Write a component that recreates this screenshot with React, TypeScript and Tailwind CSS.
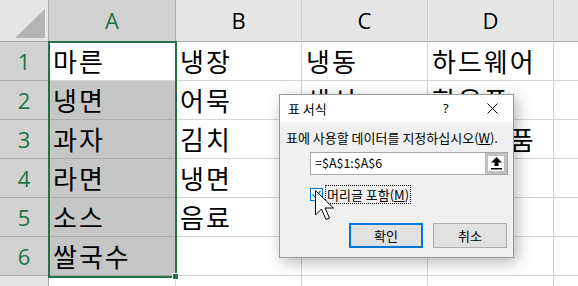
import React from "react";

const rows: string[][] = [
  ["마른", "냉장", "냉동", "하드웨어"],
  ["냉면", "어묵", "생선", "학용품"],
  ["과자", "김치", "", "주방용품"],
  ["라면", "냉면", "", ""],
  ["소스", "음료", "", ""],
  ["쌀국수", "", "", ""],
];

const colW = ["w-[127px]", "w-[126px]", "w-[126px]", "w-[126px]"];

export default function App() {
  return (
    <div className="relative w-[578px] h-[286px] overflow-hidden bg-white font-['Noto_Sans_CJK_KR',sans-serif] text-black">
      {/* Column header */}
      <div className="flex h-[42px]">
        <div className="relative w-[49px] shrink-0 bg-[#e6e6e6] border-r border-b border-[#ababab]">
          <svg className="absolute left-0 top-0" width="48" height="41" viewBox="0 0 48 41">
            <polygon points="45,9 45,38 15,38" fill="#b4b4b4" />
          </svg>
        </div>
        {["A", "B", "C", "D"].map((c, i) => (
          <div
            key={c}
            className={`${colW[i]} shrink-0 flex items-center justify-center border-r border-b border-[#ababab] font-['Open_Sans',sans-serif] text-[22px] ${
              i === 0 ? "bg-[#d2d2d2] text-[#217346]" : "bg-[#e6e6e6] text-black border-r-[#d0d0d0]"
            }`}
          >
            {c}
          </div>
        ))}
        <div className="flex-1 bg-[#e6e6e6] border-b border-[#ababab]" />
      </div>

      {/* Rows */}
      {rows.map((r, ri) => (
        <div key={ri} className="flex h-[39px]">
          <div className="w-[49px] shrink-0 flex items-center justify-center bg-[#d2d2d2] border-r border-b border-[#ababab] font-['Open_Sans',sans-serif] text-[22px] text-[#217346]">
            {ri + 1}
          </div>
          {r.map((v, ci) => (
            <div
              key={ci}
              className={`${colW[ci]} shrink-0 flex items-center pl-[4px] text-[26px] tracking-[2px] leading-none whitespace-nowrap border-r border-b ${
                ci === 0
                  ? ri === 0
                    ? "bg-white border-[#d4d4d4]"
                    : "bg-[#c6c6c6] border-b-[#ababab] border-r-[#d4d4d4]"
                  : "bg-white border-[#d4d4d4]"
              }`}
            >
              {v}
            </div>
          ))}
          <div className="flex-1 border-b border-[#d4d4d4]" />
        </div>
      ))}
      <div className="flex h-[39px]">
        <div className="w-[49px] shrink-0 bg-[#e6e6e6] border-r border-[#ababab]" />
        {colW.map((w, i) => (
          <div key={i} className={`${w} shrink-0 border-r border-[#d4d4d4]`} />
        ))}
      </div>

      {/* Selection */}
      <div className="absolute left-[48px] top-[41px] w-[129px] h-[237px] border-2 border-[#217346]" />
      <div className="absolute left-[172px] top-[273px] w-[7px] h-[7px] bg-[#217346] border border-white" />

      {/* Dialog */}
      <div className="absolute left-[279px] top-[94px] w-[235px] h-[164px] flex flex-col border border-[#9a9a9a] bg-[#f0f0f0] shadow-[3px_4px_14px_rgba(0,0,0,0.3)]">
        <div className="h-[27px] shrink-0 bg-white flex items-center pl-[8px] text-[13px] relative">
          <span>표 서식</span>
          <span className="absolute left-[163px] top-[4px] text-[13px] font-['Noto_Sans',sans-serif]">?</span>
          <svg className="absolute left-[207px] top-[8px]" width="11" height="11" viewBox="0 0 11 11">
            <path d="M0.5 0.5 L10.5 10.5 M10.5 0.5 L0.5 10.5" stroke="#000" strokeWidth="1" />
          </svg>
        </div>
        <div className="flex-1 flex flex-col">
          <div className="mt-[8px] ml-[6px] text-[13px] leading-[16px] whitespace-nowrap">
            표에 사용할 데이터를 지정하십시오(<span className="underline">W</span>).
          </div>
          <div className="mt-[6px] ml-[30px] w-[198px] h-[23px] flex border border-[#a6a6a6] bg-white">
            <div className="flex-1 flex items-center pl-[4px] text-[12.5px]">=$A$1:$A$6</div>
            <div className="w-[22px] h-full bg-white border-[3px] border-[#c0c0c0] flex items-center justify-center">
              <svg width="11" height="13" viewBox="0 0 11 13">
                <polygon points="5.5,0 11,5.5 7.5,5.5 7.5,9 3.5,9 3.5,5.5 0,5.5" fill="#000" />
                <rect x="0" y="11" width="11" height="1.5" fill="#000" />
              </svg>
            </div>
          </div>
          <div className="mt-[10px] ml-[30px] flex items-center">
            <div className="w-[13px] h-[13px] border border-[#0078d7] bg-white flex items-center justify-center">
              <svg width="11" height="11" viewBox="0 0 11 11">
                <path d="M1.5 5.5 L4 8 L9.5 2" stroke="#0078d7" strokeWidth="1.3" fill="none" />
              </svg>
            </div>
            <div className="ml-[2px] border border-dotted border-black px-[1px] h-[19px] flex items-center text-[13px] whitespace-nowrap">
              머리글 포함(<span className="underline">M</span>)
            </div>
          </div>
          <div className="mt-[19px] ml-[69px] flex gap-[10px]">
            <div className="w-[74px] h-[25px] border-2 border-[#0078d7] bg-[#e1e1e1] flex items-center justify-center text-[13px]">
              확인
            </div>
            <div className="w-[74px] h-[25px] border border-[#adadad] bg-[#e1e1e1] flex items-center justify-center text-[13px]">
              취소
            </div>
          </div>
        </div>
      </div>

      {/* Cursor */}
      <svg className="absolute left-[315px] top-[190px]" width="22" height="36" viewBox="0 0 22 36">
        <polygon
          points="0.5,0.5 0.5,25 6.5,19 11,29.5 14.5,28 10,18 18.5,18"
          fill="#fff"
          stroke="#000"
          strokeWidth="1"
          strokeLinejoin="miter"
        />
      </svg>
    </div>
  );
}
